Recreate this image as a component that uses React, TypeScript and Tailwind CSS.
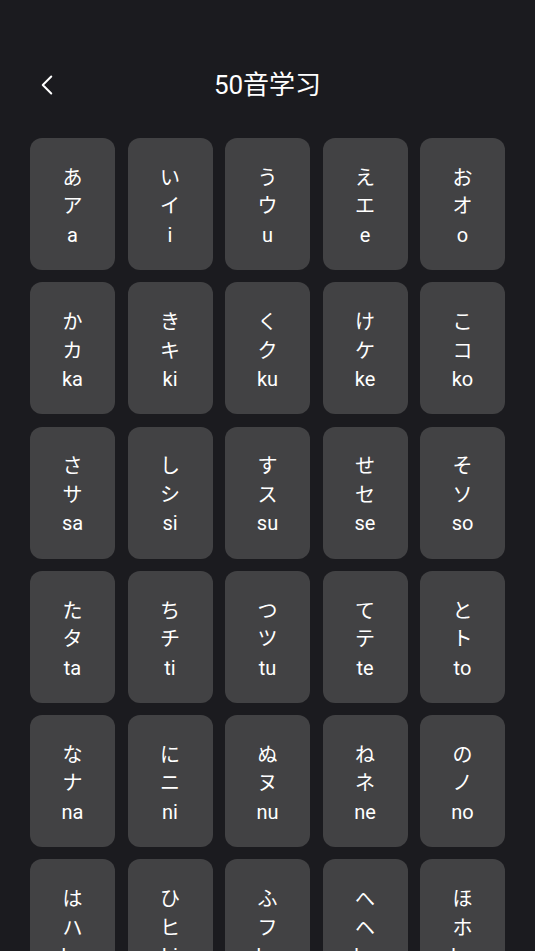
import { ChevronLeft } from "lucide-react";

const rows = [
  [["あ", "ア", "a"], ["い", "イ", "i"], ["う", "ウ", "u"], ["え", "エ", "e"], ["お", "オ", "o"]],
  [["か", "カ", "ka"], ["き", "キ", "ki"], ["く", "ク", "ku"], ["け", "ケ", "ke"], ["こ", "コ", "ko"]],
  [["さ", "サ", "sa"], ["し", "シ", "si"], ["す", "ス", "su"], ["せ", "セ", "se"], ["そ", "ソ", "so"]],
  [["た", "タ", "ta"], ["ち", "チ", "ti"], ["つ", "ツ", "tu"], ["て", "テ", "te"], ["と", "ト", "to"]],
  [["な", "ナ", "na"], ["に", "ニ", "ni"], ["ぬ", "ヌ", "nu"], ["ね", "ネ", "ne"], ["の", "ノ", "no"]],
  [["は", "ハ", "ha"], ["ひ", "ヒ", "hi"], ["ふ", "フ", "hu"], ["へ", "ヘ", "he"], ["ほ", "ホ", "ho"]],
];

const font = { fontFamily: "Roboto, 'Noto Sans CJK SC', sans-serif" };

export default function App() {
  return (
    <div className="min-h-screen h-[951px] overflow-hidden bg-[#1b1b1f] text-white" style={font}>
      <header className="relative flex items-center justify-center h-[60px] mt-[55px]">
        <button className="absolute left-[30px] top-1/2 -translate-y-1/2">
          <ChevronLeft className="w-[34px] h-[34px]" strokeWidth={1.4} />
        </button>
        <h1 className="text-[26px] leading-none">50音学习</h1>
      </header>
      <div className="grid grid-cols-5 gap-x-[12.5px] gap-y-[12.25px] px-[30px] mt-[23px]">
        {rows.flat().map(([h, k, r]) => (
          <div
            key={r}
            className="h-[132px] rounded-[12px] bg-[#424244] flex flex-col items-center justify-center text-[20px] leading-[28.5px] pt-[5px]"
          >
            <span>{h}</span>
            <span>{k}</span>
            <span>{r}</span>
          </div>
        ))}
      </div>
    </div>
  );
}
